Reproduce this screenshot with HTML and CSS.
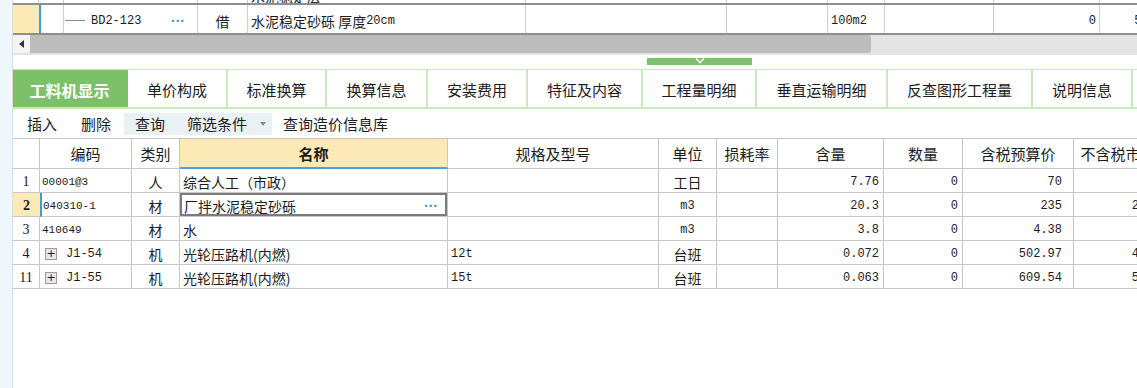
FILE: index.html
```html
<!DOCTYPE html>
<html lang="zh">
<head>
<meta charset="utf-8">
<title>工料机显示</title>
<link rel="stylesheet" href="styles.css">
</head>
<body>
<div class="app">
  <div class="side"></div>
  <div class="main">
    <div class="topgrid">
      <div class="trow prev">
        <div class="tc"></div><div class="tc"></div><div class="tc"></div><div class="tc"></div>
        <div class="tc"><span class="peek">水泥稳定层</span></div><div class="tc"></div><div class="tc"></div><div class="tc"></div>
        <div class="tc"></div><div class="tc"></div><div class="tc"></div>
      </div>
      <div class="trow cur">
        <div class="tc rh"></div>
        <div class="tc sel"></div>
        <div class="tc code"><span class="tline"></span><span class="mono">BD2-123</span><span class="dots">···</span></div>
        <div class="tc ctr">借</div>
        <div class="tc">水泥稳定砂砾 厚度<span class="mono">20cm</span></div>
        <div class="tc"></div>
        <div class="tc"></div>
        <div class="tc mono">100m2</div>
        <div class="tc"></div>
        <div class="tc num">0</div>
        <div class="tc num">5.82</div>
      </div>
    </div>
    <div class="hscroll">
      <div class="sbtn"><span class="ltri"></span></div>
      <div class="thumb"></div>
      <div class="track"></div>
    </div>
    <div class="splitter">
      <div class="handle"><svg width="12" height="6" viewBox="0 0 12 6"><polyline points="2,0.5 6,4.5 10,0.5" fill="none" stroke="#ffffff" stroke-width="1.6"/></svg></div>
    </div>
    <div class="tabs">
      <div class="tab on w115">工料机显示</div>
      <div class="tab w100">单价构成</div>
      <div class="tab w99">标准换算</div>
      <div class="tab w101">换算信息</div>
      <div class="tab w100">安装费用</div>
      <div class="tab w115">特征及内容</div>
      <div class="tab w114">工程量明细</div>
      <div class="tab w131">垂直运输明细</div>
      <div class="tab w145">反查图形工程量</div>
      <div class="tab w100">说明信息</div>
    </div>
    <div class="toolbar">
      <div class="tb">插入</div>
      <div class="tb">删除</div>
      <div class="tb hl">查询</div>
      <div class="tb hl filter">筛选条件<span class="caret"></span></div>
      <div class="tb">查询造价信息库</div>
    </div>
    <div class="grid">
      <div class="g gh"></div>
      <div class="g gh">编码</div>
      <div class="g gh">类别</div>
      <div class="g gh namehd">名称</div>
      <div class="g gh">规格及型号</div>
      <div class="g gh">单位</div>
      <div class="g gh">损耗率</div>
      <div class="g gh">含量</div>
      <div class="g gh">数量</div>
      <div class="g gh">含税预算价</div>
      <div class="g gh">不含税市场价</div>

      <div class="g rn">1</div>
      <div class="g mono code2">00001@3</div>
      <div class="g ctr">人</div>
      <div class="g">综合人工（市政）</div>
      <div class="g"></div>
      <div class="g ctr">工日</div>
      <div class="g"></div>
      <div class="g num">7.76</div>
      <div class="g num">0</div>
      <div class="g num p11">70</div>
      <div class="g num p2">70</div>

      <div class="g rn rsel">2</div>
      <div class="g mono code2 csel">040310-1</div>
      <div class="g ctr">材</div>
      <div class="g edit">厂拌水泥稳定砂砾<span class="dots">···</span></div>
      <div class="g"></div>
      <div class="g ctr mono">m3</div>
      <div class="g"></div>
      <div class="g num">20.3</div>
      <div class="g num">0</div>
      <div class="g num p11">235</div>
      <div class="g num p2">201.70</div>

      <div class="g rn">3</div>
      <div class="g mono code2">410649</div>
      <div class="g ctr">材</div>
      <div class="g">水</div>
      <div class="g"></div>
      <div class="g ctr mono">m3</div>
      <div class="g"></div>
      <div class="g num">3.8</div>
      <div class="g num">0</div>
      <div class="g num p11">4.38</div>
      <div class="g num p2">3.88</div>

      <div class="g rn">4</div>
      <div class="g"><span class="exp">+</span><span class="mono">J1-54</span></div>
      <div class="g ctr">机</div>
      <div class="g">光轮压路机(内燃)</div>
      <div class="g mono">12t</div>
      <div class="g ctr">台班</div>
      <div class="g"></div>
      <div class="g num">0.072</div>
      <div class="g num">0</div>
      <div class="g num p11">502.97</div>
      <div class="g num p2">445.12</div>

      <div class="g rn">11</div>
      <div class="g"><span class="exp">+</span><span class="mono">J1-55</span></div>
      <div class="g ctr">机</div>
      <div class="g">光轮压路机(内燃)</div>
      <div class="g mono">15t</div>
      <div class="g ctr">台班</div>
      <div class="g"></div>
      <div class="g num">0.063</div>
      <div class="g num">0</div>
      <div class="g num p11">609.54</div>
      <div class="g num p2">539.42</div>
    </div>
  </div>
</div>
</body>
</html>
```
FILE: styles.css
```css
* { box-sizing: border-box; }
html, body { margin: 0; padding: 0; }
body {
  width: 1137px;
  height: 388px;
  overflow: hidden;
  background: #fff;
  color: #1c1c1c;
  font-family: "Noto Sans CJK SC", "Microsoft YaHei", sans-serif;
  font-size: 14px;
}
.app { display: flex; height: 388px; }
.side {
  width: 13px;
  flex: none;
  background: #eef8fc;
  border-right: 1px solid #dcdcdc;
}
.main { flex: 1; min-width: 0; overflow: hidden; }

.mono { font-family: "Liberation Mono", "DejaVu Sans Mono", monospace; font-size: 12px; }

/* top grid */
.topgrid {
  height: 35px;
  display: flex;
  flex-direction: column;
  justify-content: flex-end;
  overflow: hidden;
}
.trow {
  flex: none;
  display: grid;
  grid-template-columns: 26px 25px 134px 50px 278px 201px 101px 57px 109px 106px 67px;
  border-bottom: 2px solid #8e8e8e;
  width: max-content;
}
.trow.prev { height: 31px; }
.trow.cur { height: 30px; }
.tc {
  border-right: 1px solid #cfcfcf;
  display: flex;
  align-items: center;
  padding: 3px 3px 0;
  white-space: nowrap;
  overflow: hidden;
}
.prev .tc { align-items: flex-end; padding-bottom: 0; }
.peek { display: block; line-height: 13px; height: 13px; overflow: hidden; }
.cur .rh { background: #fde9b6; border-right: none; }
.cur .sel { border-left: 2px solid #3a9fd9; }
.tc.ctr { justify-content: center; }
.tc.num { justify-content: flex-end; font-family: "Liberation Mono", monospace; font-size: 12px; padding-right: 3px; }
.code { padding-left: 1px; padding-right: 12px; }
.tline { display: inline-block; width: 20px; height: 1px; background: #8a8a8a; margin-right: 6px; }
.dots {
  margin-left: auto;
  color: #3e8fd8;
  font-family: "Liberation Sans", sans-serif;
  font-size: 14px;
  font-weight: bold;
  letter-spacing: 0;
}

/* scrollbar */
.hscroll {
  display: flex;
  height: 20px;
  background: #e3e3e3;
  padding-bottom: 2px;
}
.sbtn {
  width: 17px;
  flex: none;
  background: #f3f3f3;
  display: flex;
  align-items: center;
  justify-content: center;
}
.ltri {
  width: 0; height: 0;
  border-top: 4px solid transparent;
  border-bottom: 4px solid transparent;
  border-right: 5px solid #333;
}
.thumb { width: 841px; flex: none; background: #bcbcbc; border-radius: 0 3px 3px 0; }
.track { flex: 1; }

/* splitter */
.splitter { height: 14px; padding-top: 3px; }
.handle {
  margin-left: 634px;
  width: 105px;
  height: 7px;
  background: #7cc26a;
  display: flex;
  justify-content: center;
  align-items: flex-start;
}
.handle svg { display: block; }

/* tabs */
.tabs {
  display: flex;
  height: 40px;
  border-top: 1px solid #c9e8bd;
  border-bottom: 2px solid #c9e8bd;
}
.tab {
  flex: none;
  display: flex;
  align-items: center;
  justify-content: center;
  border-right: 2px solid #c9e8bd;
  font-size: 15px;
  color: #1c1c1c;
  padding-top: 2px;
  white-space: nowrap;
}
.tab.on { background: #7cc169; color: #fff; font-weight: bold; font-size: 16px; border-right-color: #7cc169; }
.w99 { width: 99px; } .w100 { width: 100px; } .w101 { width: 101px; }
.w114 { width: 114px; } .w115 { width: 115px; } .w131 { width: 131px; } .w145 { width: 145px; }

/* toolbar */
.toolbar {
  height: 29px;
  display: flex;
  align-items: center;
  padding-left: 3px;
  font-size: 15px;
}
.tb {
  height: 22px;
  display: flex;
  align-items: center;
  padding: 0 11px;
  margin-right: 2px;
  white-space: nowrap;
}
.tb.hl { background: #e9f1f4; margin-right: 0; }
.tb.filter { padding-right: 6px; }
.caret {
  display: inline-block;
  width: 0; height: 0;
  margin-left: 13px;
  border-left: 3px solid transparent;
  border-right: 3px solid transparent;
  border-top: 4px solid #8a8a8a;
}

/* lower grid */
.grid {
  display: grid;
  grid-template-columns: 27px 92px 48px 268px 211px 58px 61px 106px 79px 111px 104px;
  grid-template-rows: 30px;
  grid-auto-rows: 24px;
  border-top: 1px solid #c6c6c6;
  width: max-content;
}
.g {
  border-right: 1px solid #c6c6c6;
  border-bottom: 1px solid #c6c6c6;
  display: flex;
  align-items: center;
  padding: 2px 3px 0;
  white-space: nowrap;
  overflow: hidden;
}
.gh { justify-content: center; font-size: 15px; padding-top: 0; }
.gh.namehd { background: #fde9b6; font-weight: bold; border-bottom: 2px solid #4aa3df; }
.g.ctr { justify-content: center; }
.g.num {
  justify-content: flex-end;
  font-family: "Liberation Mono", monospace;
  font-size: 12px;
  padding-right: 4px;
}
.g.num.p11 { padding-right: 11px; }
.g.num.p2 { padding-right: 2px; }
.g.rn {
  justify-content: center;
  font-family: "Liberation Serif", serif;
  font-size: 14px;
  padding-left: 1px; padding-right: 1px;
}
.g.rn.rsel { background: #fde9b6; font-weight: bold; border-right: none; }
.g.csel { border-left: 2px solid #3a9fd9; padding-left: 1px; }
.code2 { font-size: 11px; padding-left: 2px; }
.g.edit { box-shadow: inset 0 0 0 2px #7b7b7b; padding-right: 9px; padding-left: 4px; }
.exp {
  display: inline-flex;
  align-items: center;
  justify-content: center;
  width: 12px;
  height: 12px;
  margin-left: 2px;
  margin-right: 9px;
  border: 1px solid #9a9a9a;
  background: #e6e6e6;
  font-family: "DejaVu Sans", sans-serif;
  font-size: 11px;
  line-height: 1;
  color: #222;
}
```
